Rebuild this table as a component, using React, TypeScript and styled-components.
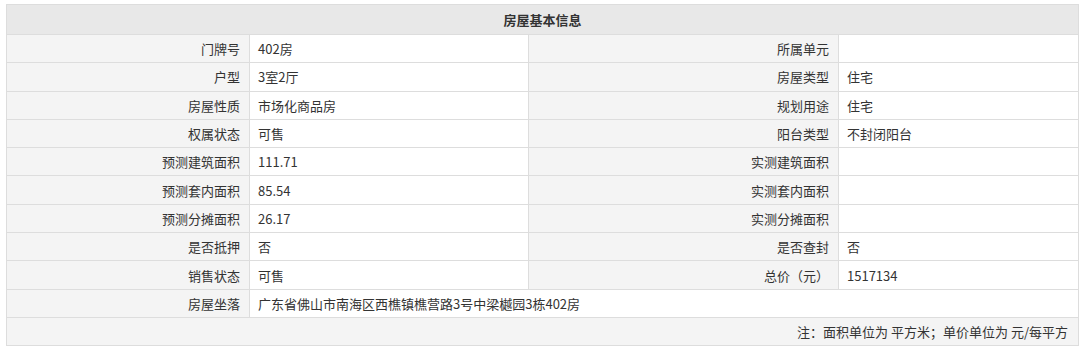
import React from 'react';
import styled, { createGlobalStyle } from 'styled-components';

const GlobalStyle = createGlobalStyle`
  html, body {
    margin: 0;
    padding: 0;
    background: #ffffff;
  }
  body {
    font-family: "Noto Sans CJK SC", "Noto Sans", "Liberation Sans", sans-serif;
    font-size: 13px;
    color: #333333;
  }
`;

type Pair = { label: string; value: string };

const rows: [Pair, Pair][] = [
  [{ label: '门牌号', value: '402房' }, { label: '所属单元', value: '' }],
  [{ label: '户型', value: '3室2厅' }, { label: '房屋类型', value: '住宅' }],
  [{ label: '房屋性质', value: '市场化商品房' }, { label: '规划用途', value: '住宅' }],
  [{ label: '权属状态', value: '可售' }, { label: '阳台类型', value: '不封闭阳台' }],
  [{ label: '预测建筑面积', value: '111.71' }, { label: '实测建筑面积', value: '' }],
  [{ label: '预测套内面积', value: '85.54' }, { label: '实测套内面积', value: '' }],
  [{ label: '预测分摊面积', value: '26.17' }, { label: '实测分摊面积', value: '' }],
  [{ label: '是否抵押', value: '否' }, { label: '是否查封', value: '否' }],
  [{ label: '销售状态', value: '可售' }, { label: '总价（元）', value: '1517134' }],
];

const Page = styled.div`
  padding: 4px 2px 0 6px;
`;

const Table = styled.table`
  width: 1072px;
  border-collapse: collapse;
  table-layout: fixed;
`;

const HeadCell = styled.th`
  height: 29px;
  padding: 0;
  background: #e8e8e8;
  border: 1px solid #dddddd;
  font-weight: bold;
  font-size: 13px;
  color: #333333;
  text-align: center;
`;

const Cell = styled.td<{ $label?: boolean; $align?: 'left' | 'right' }>`
  height: 27.3px;
  padding: 0 9px 0 8px;
  border: 1px solid #dddddd;
  background: ${({ $label }) => ($label ? '#f4f4f4' : '#ffffff')};
  text-align: ${({ $align }) => $align || 'left'};
  white-space: nowrap;
  line-height: 1;
`;

const NoteCell = styled(Cell)`
  padding-right: 10px;
`;

export default function App() {
  return (
    <Page>
      <GlobalStyle />
      <Table>
        <colgroup>
          <col style={{ width: 243 }} />
          <col style={{ width: 279 }} />
          <col style={{ width: 310 }} />
          <col style={{ width: 240 }} />
        </colgroup>
        <thead>
          <tr>
            <HeadCell colSpan={4}>房屋基本信息</HeadCell>
          </tr>
        </thead>
        <tbody>
          {rows.map(([a, b]) => (
            <tr key={a.label}>
              <Cell $label $align="right">{a.label}</Cell>
              <Cell>{a.value}</Cell>
              <Cell $label $align="right">{b.label}</Cell>
              <Cell>{b.value}</Cell>
            </tr>
          ))}
          <tr>
            <Cell $label $align="right">房屋坐落</Cell>
            <Cell colSpan={3}>广东省佛山市南海区西樵镇樵营路3号中梁樾园3栋402房</Cell>
          </tr>
          <tr>
            <NoteCell $label $align="right" colSpan={4}>
              注：面积单位为 平方米；单价单位为 元/每平方
            </NoteCell>
          </tr>
        </tbody>
      </Table>
    </Page>
  );
}
